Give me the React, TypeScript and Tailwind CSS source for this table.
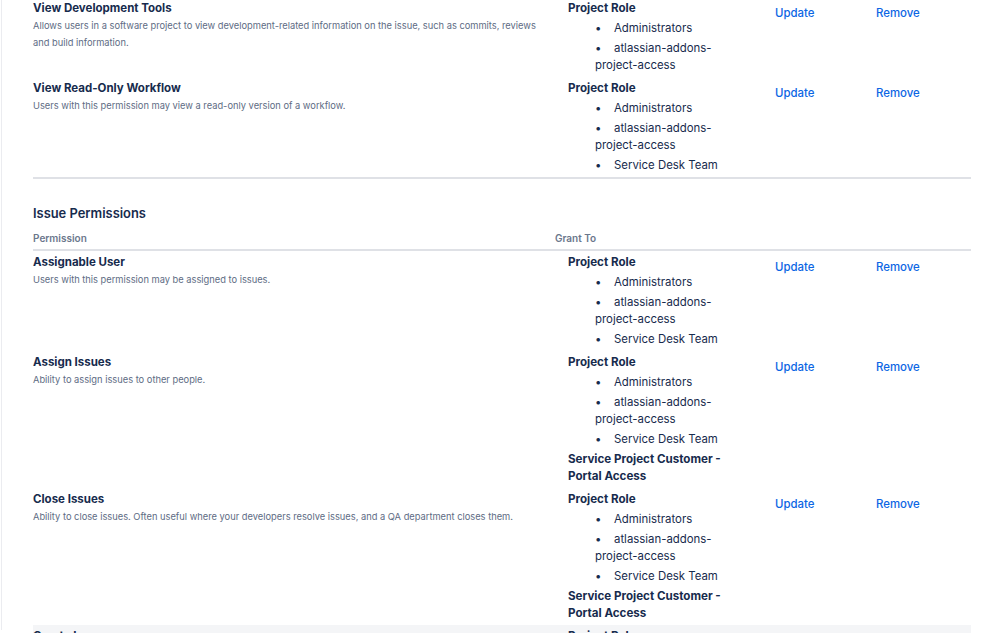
import React from 'react';

type Grant = { heading: string; items?: string[] };
type Permission = { name: string; description: string; grants: Grant[]; highlight?: boolean };

const ROLES = ['Administrators', 'atlassian-addons-project-access', 'Service Desk Team'];

const projectPermissions: Permission[] = [
  {
    name: 'View Development Tools',
    description:
      'Allows users in a software project to view development-related information on the issue, such as commits, reviews and build information.',
    grants: [{ heading: 'Project Role', items: ROLES.slice(0, 2) }],
  },
  {
    name: 'View Read-Only Workflow',
    description: 'Users with this permission may view a read-only version of a workflow.',
    grants: [{ heading: 'Project Role', items: ROLES }],
  },
];

const issuePermissions: Permission[] = [
  {
    name: 'Assignable User',
    description: 'Users with this permission may be assigned to issues.',
    grants: [{ heading: 'Project Role', items: ROLES }],
  },
  {
    name: 'Assign Issues',
    description: 'Ability to assign issues to other people.',
    grants: [
      { heading: 'Project Role', items: ROLES },
      { heading: 'Service Project Customer - Portal Access' },
    ],
  },
  {
    name: 'Close Issues',
    description:
      'Ability to close issues. Often useful where your developers resolve issues, and a QA department closes them.',
    grants: [
      { heading: 'Project Role', items: ROLES },
      { heading: 'Service Project Customer - Portal Access' },
    ],
  },
  {
    name: 'Create Issues',
    description: 'Ability to create issues.',
    grants: [{ heading: 'Project Role', items: ROLES }],
    highlight: true,
  },
];

function GrantList({ grants }: { grants: Grant[] }): React.JSX.Element {
  return (
    <div className="flex w-[165px] flex-col gap-[3px]">
      {grants.map((grant) => (
        <div key={grant.heading} className="flex flex-col gap-[3px]">
          <div className="text-[11.6px] leading-[17px] font-bold text-[#172b4d]">{grant.heading}</div>
          {grant.items ? (
            <ul className="flex flex-col gap-[3px] pl-[27px]">
              {grant.items.map((item) => (
                <li key={item} className="text-[11.4px] leading-[17px] text-[#172b4d]">
                  <span className="inline-block w-[19px]">•</span>
                  {item}
                </li>
              ))}
            </ul>
          ) : null}
        </div>
      ))}
    </div>
  );
}

function PermissionRow({ permission }: { permission: Permission }): React.JSX.Element {
  return (
    <div className={`flex pt-[3px] pb-[3px] ${permission.highlight ? 'bg-[#f4f5f7]' : ''}`}>
      <div className="w-[522px] shrink-0">
        <div className="text-[11.5px] leading-[17px] font-bold text-[#172b4d]">{permission.name}</div>
        <p className="w-[508px] text-[9.3px] leading-[17px] text-[#5e6c84]">{permission.description}</p>
      </div>
      <div className="w-[207px] shrink-0 pl-[13px]">
        <GrantList grants={permission.grants} />
      </div>
      <div className="w-[101px] shrink-0 pt-[5px] pl-[13px] text-[11.4px] leading-[17px]">
        <a href="#" className="font-medium text-[#0c66e4]">
          Update
        </a>
      </div>
      <div className="pt-[5px] pl-[13px] text-[11.4px] leading-[17px]">
        <a href="#" className="font-medium text-[#0c66e4]">
          Remove
        </a>
      </div>
    </div>
  );
}

export default function App(): React.JSX.Element {
  return (
    <div
      className="h-[633px] w-[999px] overflow-hidden bg-white"
      style={{ fontFamily: 'Inter, "Noto Sans", sans-serif' }}
    >
      <div className="ml-px h-full border-l border-[#ebecf0]">
        <div className="-mt-[3.5px] ml-[31px] w-[938px]">
          <div className="border-b-2 border-[#dfe1e6]">
            {projectPermissions.map((permission) => (
              <PermissionRow key={permission.name} permission={permission} />
            ))}
          </div>

          <h3 className="mt-[25px] text-[12.9px] leading-[20px] font-semibold text-[#172b4d]">
            Issue Permissions
          </h3>
          <div className="mt-[7px] flex border-b-2 border-[#dfe1e6] pb-[4px] text-[10px] leading-[14px] font-semibold text-[#6b778c]">
            <div className="w-[522px] shrink-0">Permission</div>
            <div>Grant To</div>
          </div>
          {issuePermissions.map((permission) => (
            <PermissionRow key={permission.name} permission={permission} />
          ))}
        </div>
      </div>
    </div>
  );
}
